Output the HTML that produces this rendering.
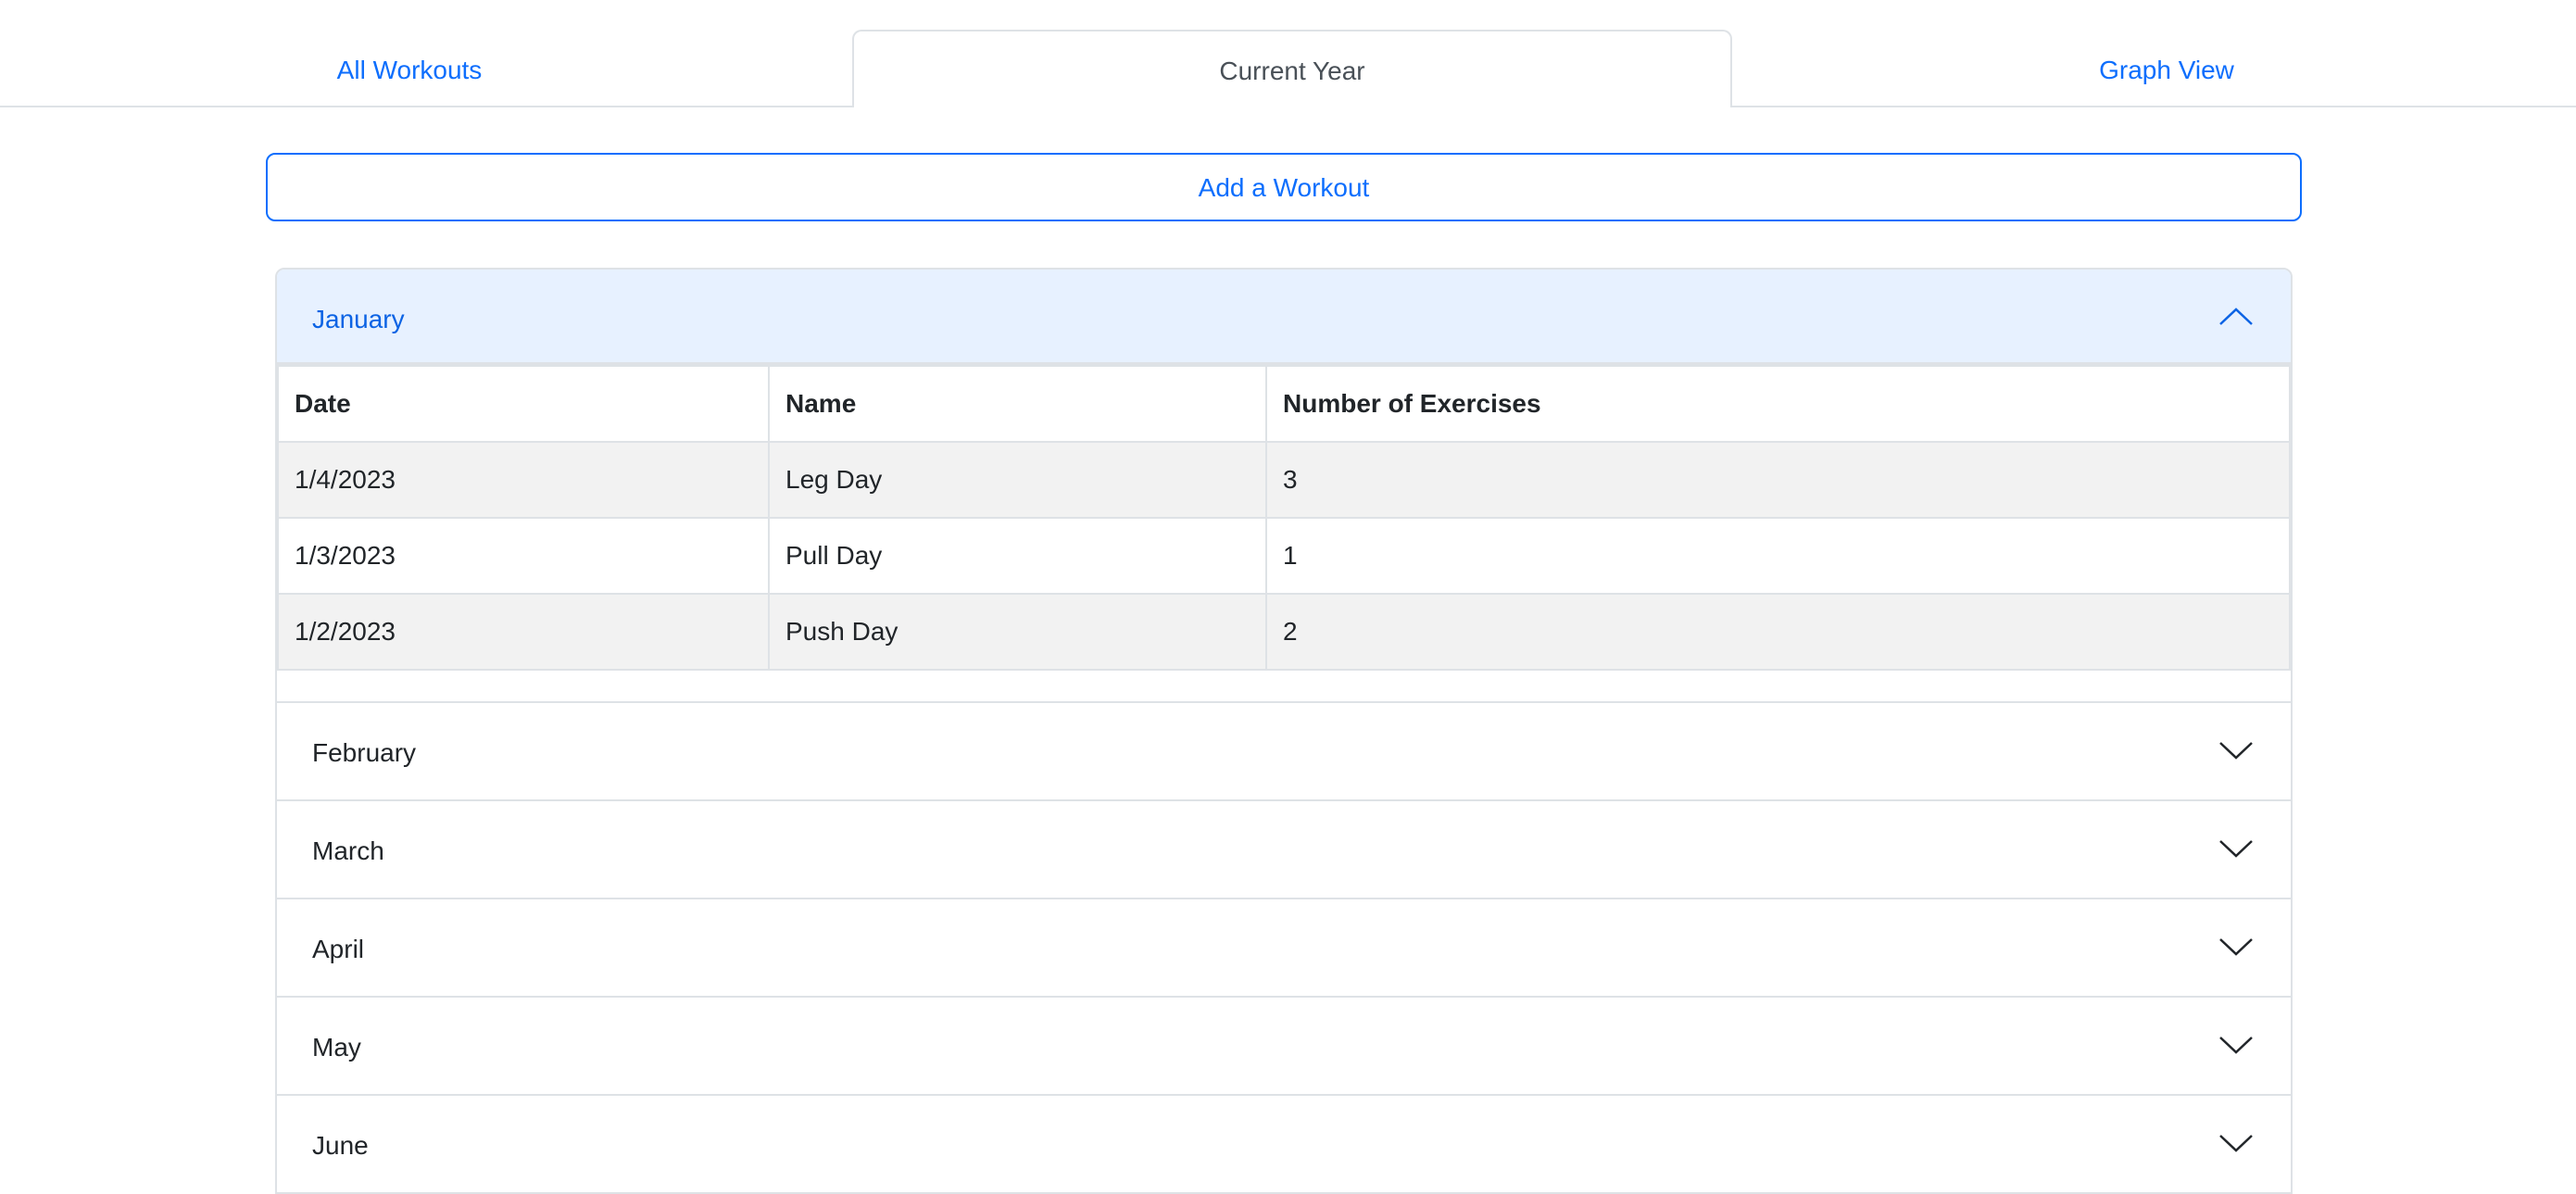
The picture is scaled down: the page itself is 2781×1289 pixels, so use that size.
<!DOCTYPE html>
<html><head><meta charset="utf-8"><style>
*{box-sizing:border-box;margin:0;padding:0}
body{width:2781px;height:1282px;overflow:hidden;background:#fff;font-family:"Segoe UI","Liberation Sans",sans-serif;font-size:28px;color:#212529;position:relative}
.abs{position:absolute}
.tabline{left:0;top:114px;width:2781px;height:2px;background:#dee2e6}
.tab{top:34px;height:84px;line-height:84px;text-align:center;color:#0d6efd;font-size:28px}
.active{top:32px;border:2px solid #dee2e6;border-bottom:none;border-radius:10px 10px 0 0;background:#fff;color:#495057;height:84px;line-height:86px}
.btn{left:287px;top:165px;width:2198px;height:74px;border:2px solid #0d6efd;border-radius:10px;color:#0d6efd;text-align:center;line-height:72px;font-size:28px}
.acc{left:297px;top:289px;width:2178px;height:1000px;border:2px solid #dee2e6;border-radius:10px 10px 0 0;overflow:hidden}
.hdr{position:absolute;left:0;top:0;width:100%;height:103px;background:#e7f1ff;color:#0c63e4;border-bottom:3px solid #dee2e6}
.lbl{position:absolute;left:38px;top:2px;line-height:103px}
table{position:absolute;left:0;top:103px;width:2174px;border-collapse:collapse}
td,th{border:2px solid #dee2e6;height:82px;padding:0 17px;text-align:left;font-size:28px;vertical-align:middle}
th{font-weight:bold}
tr.s td{background:#f2f2f2}
.item{position:absolute;left:0;width:100%;height:106px;border-top:2px solid #dee2e6}
.item span{position:absolute;left:38px;top:2px;line-height:104px}
.chev{position:absolute;left:2096px}
</style></head><body>
<div class="abs tabline"></div>
<div class="abs tab" style="left:0;width:884px">All Workouts</div>
<div class="abs tab active" style="left:920px;width:950px">Current Year</div>
<div class="abs tab" style="left:1897px;width:884px">Graph View</div>
<div class="abs btn">Add a Workout</div>
<div class="abs acc">
 <div class="hdr"><span class="lbl">January</span>
  <svg class="chev" style="top:40px" width="38" height="22" viewBox="0 0 38 22"><path d="M2 19 L19 3 L36 19" fill="none" stroke="#0c63e4" stroke-width="2.5"/></svg></div>
 <table>
  <tr><th style="width:530px">Date</th><th style="width:537px">Name</th><th>Number of Exercises</th></tr>
  <tr class="s"><td>1/4/2023</td><td>Leg Day</td><td>3</td></tr>
  <tr><td>1/3/2023</td><td>Pull Day</td><td>1</td></tr>
  <tr class="s"><td>1/2/2023</td><td>Push Day</td><td>2</td></tr>
 </table>
 <div class="item" style="top:466px"><span>February</span><svg class="chev" style="top:40px" width="38" height="22" viewBox="0 0 38 22"><path d="M2 3 L19 19 L36 3" fill="none" stroke="#212529" stroke-width="2.5"/></svg></div>
 <div class="item" style="top:572px"><span>March</span><svg class="chev" style="top:40px" width="38" height="22" viewBox="0 0 38 22"><path d="M2 3 L19 19 L36 3" fill="none" stroke="#212529" stroke-width="2.5"/></svg></div>
 <div class="item" style="top:678px"><span>April</span><svg class="chev" style="top:40px" width="38" height="22" viewBox="0 0 38 22"><path d="M2 3 L19 19 L36 3" fill="none" stroke="#212529" stroke-width="2.5"/></svg></div>
 <div class="item" style="top:784px"><span>May</span><svg class="chev" style="top:40px" width="38" height="22" viewBox="0 0 38 22"><path d="M2 3 L19 19 L36 3" fill="none" stroke="#212529" stroke-width="2.5"/></svg></div>
 <div class="item" style="top:890px"><span>June</span><svg class="chev" style="top:40px" width="38" height="22" viewBox="0 0 38 22"><path d="M2 3 L19 19 L36 3" fill="none" stroke="#212529" stroke-width="2.5"/></svg></div>
</div>
</body></html>
